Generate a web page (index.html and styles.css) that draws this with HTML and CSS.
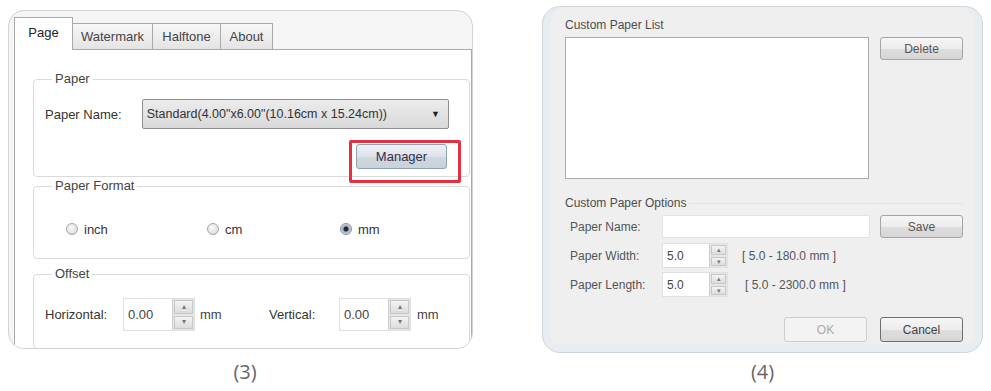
FILE: index.html
```html
<!DOCTYPE html>
<html lang="en">
<head>
    <meta charset="UTF-8">
    <meta name="viewport" content="width=device-width, initial-scale=1.0">
    <title>Paper Settings</title>
    <link rel="stylesheet" href="styles.css">
</head>
<body>

<div class="page">

    <!-- (3) driver properties, Page tab -->
    <div class="figure fig-left">
        <div class="tabdlg">
            <div class="tabs">
                <div class="tab tab-page active">Page</div>
                <div class="tab tab-water">Watermark</div>
                <div class="tab tab-half">Halftone</div>
                <div class="tab tab-about">About</div>
            </div>
            <div class="pane">
                <div class="group group-paper">
                    <div class="group-title">Paper</div>
                    <div class="row row-name">
                        <span class="lbl lbl-name">Paper Name:</span>
                        <div class="select">
                            <span class="select-text">Standard(4.00"x6.00"(10.16cm x 15.24cm))</span>
                            <span class="select-arrow">&#9660;</span>
                        </div>
                    </div>
                    <div class="row row-manager">
                        <div class="mark">
                            <button class="btn btn-manager">Manager</button>
                            <span class="highlight"></span>
                        </div>
                    </div>
                </div>

                <div class="group group-format">
                    <div class="group-title">Paper Format</div>
                    <div class="row row-radios">
                        <label class="radio radio-inch"><span class="dot"></span>inch</label>
                        <label class="radio radio-cm"><span class="dot"></span>cm</label>
                        <label class="radio radio-mm"><span class="dot checked"></span>mm</label>
                    </div>
                </div>

                <div class="group group-offset">
                    <div class="group-title">Offset</div>
                    <div class="row row-offset">
                        <span class="lbl lbl-horiz">Horizontal:</span>
                        <div class="spin spin-big">
                            <span class="spin-value">0.00</span>
                            <span class="spin-btns"><span class="up">&#9652;</span><span class="down">&#9662;</span></span>
                        </div>
                        <span class="unit unit-first">mm</span>
                        <span class="lbl lbl-vert">Vertical:</span>
                        <div class="spin spin-big">
                            <span class="spin-value">0.00</span>
                            <span class="spin-btns"><span class="up">&#9652;</span><span class="down">&#9662;</span></span>
                        </div>
                        <span class="unit">mm</span>
                    </div>
                </div>
            </div>
        </div>
        <div class="caption caption-left">(3)</div>
    </div>

    <!-- (4) custom paper manager -->
    <div class="figure fig-right">
        <div class="dlg">
            <div class="dlg-title">Custom Paper List</div>
            <div class="row row-list">
                <div class="listbox"></div>
                <button class="wbtn btn-side">Delete</button>
            </div>

            <div class="dlg-title opt-title">Custom Paper Options</div>
            <div class="row row-field">
                <span class="flbl">Paper Name:</span>
                <div class="textbox"></div>
                <button class="wbtn btn-side btn-save">Save</button>
            </div>
            <div class="row row-field row-width">
                <span class="flbl">Paper Width:</span>
                <div class="spin spin-small">
                    <span class="spin-value">5.0</span>
                    <span class="spin-btns"><span class="up">&#9652;</span><span class="down">&#9662;</span></span>
                </div>
                <span class="range">[ 5.0 - 180.0 mm ]</span>
            </div>
            <div class="row row-field row-length">
                <span class="flbl">Paper Length:</span>
                <div class="spin spin-small">
                    <span class="spin-value">5.0</span>
                    <span class="spin-btns"><span class="up">&#9652;</span><span class="down">&#9662;</span></span>
                </div>
                <span class="range range-long">[ 5.0 - 2300.0 mm ]</span>
            </div>

            <div class="row row-actions">
                <button class="wbtn btn-ok" disabled>OK</button>
                <button class="wbtn btn-cancel">Cancel</button>
            </div>
        </div>
        <div class="caption">(4)</div>
    </div>

</div>

</body>
</html>
```

FILE: styles.css
```css
body {
    margin: 0;
    background: #fff;
    font-family: "Liberation Sans", Arial, sans-serif;
    color: #333;
}
.page {
    display: flex;
    align-items: flex-start;
    width: 991px;
    height: 391px;
    overflow: hidden;
}
.row {
    display: flex;
    align-items: center;
}

/* ---------- left figure ---------- */
.fig-left {
    margin: 10px 0 0 8px;
    width: 465px;
}
.tabdlg {
    box-sizing: border-box;
    height: 339px;
    border: 1px solid #d2d2d2;
    border-radius: 16px;
    background: #f5f5f5;
    padding: 6px 0 0 5px;
    overflow: hidden;
    font-size: 13px;
}
.tabs {
    display: flex;
    align-items: flex-end;
    height: 32px;
}
.tab {
    box-sizing: border-box;
    height: 26px;
    border: 1px solid #a9a9a9;
    border-bottom: none;
    margin-right: -1px;
    background: linear-gradient(#f7f7f7, #e4e4e4);
    color: #444;
    text-align: center;
    line-height: 26px;
}
.tab.active {
    height: 33px;
    margin-bottom: -1px;
    background: #fff;
    position: relative;
    z-index: 1;
    line-height: 30px;
    color: #222;
}
.tab-page { width: 59px; }
.tab-water { width: 81px; }
.tab-half { width: 69px; }
.tab-about { width: 53px; }

.pane {
    height: 320px;
    border: 1px solid #a9a9a9;
    background: #fff;
    padding: 29px 0 0 18px;
}
.group {
    box-sizing: border-box;
    width: 437px;
    border: 1px solid #dadada;
    border-radius: 4px;
    padding: 0 20px 0 11px;
}
.group-title {
    width: fit-content;
    margin: -9px 0 0 7px;
    padding: 0 3px;
    background: #fff;
    line-height: 16px;
    color: #444;
}
.group-paper { padding-bottom: 7px; }
.row-name {
    margin-top: 12px;
    height: 30px;
}
.lbl-name { width: 97px; }
.select {
    box-sizing: border-box;
    display: flex;
    align-items: center;
    justify-content: space-between;
    width: 308px;
    height: 30px;
    border: 1px solid #8f8f8f;
    border-radius: 2px;
    background: linear-gradient(#ececec, #d9d9d9);
    padding: 0 8px 0 4px;
    font-size: 12.5px;
    color: #333;
}
.select-arrow { font-size: 9px; color: #222; }
.row-manager {
    margin-top: 15px;
    justify-content: flex-end;
    padding-right: 2px;
}
.mark { position: relative; }
.btn-manager {
    box-sizing: border-box;
    width: 91px;
    height: 25px;
    border: 1px solid #8ea3b4;
    border-radius: 3px;
    background: linear-gradient(#eef1f6, #dde3ea 50%, #cfd7df 51%, #c9d2da);
    font: 13px "Liberation Sans", Arial, sans-serif;
    color: #3a2f48;
    padding: 0;
}
.highlight {
    position: absolute;
    left: -7px;
    top: -4px;
    width: 106px;
    height: 37px;
    border: 3px solid #e2323f;
    border-radius: 2px;
}

.group-format {
    margin-top: 9px;
    padding-bottom: 19px;
}
.row-radios {
    margin: 25px 0 0 21px;
    height: 20px;
}
.radio {
    display: flex;
    align-items: center;
    color: #333;
}
.radio-inch { width: 141px; }
.radio-cm { width: 133px; }
.dot {
    box-sizing: border-box;
    width: 12px;
    height: 12px;
    margin-right: 6px;
    border: 1px solid #a6a6a6;
    border-radius: 50%;
    background: radial-gradient(circle at 40% 35%, #fafafa, #d4d4d4);
}
.dot.checked {
    background: radial-gradient(circle, #2a2a2a 0 2px, #9fb3c4 3px, #dfe6ec 6px);
    border-color: #7f93a5;
}

.group-offset {
    margin-top: 15px;
    padding-bottom: 17px;
}
.row-offset {
    margin-top: 16px;
    height: 33px;
}
.lbl-horiz { width: 78px; }
.spin {
    display: flex;
    background: #fff;
    border: 1px solid #e0e0e0;
    box-sizing: border-box;
}
.spin-big {
    width: 72px;
    height: 33px;
}
.spin-value {
    flex: 1;
    display: flex;
    align-items: center;
    padding-left: 4px;
    color: #444;
}
.spin-btns {
    display: flex;
    flex-direction: column;
    width: 21px;
    background: #e6e6e6;
    border-left: 1px solid #d0d0d0;
}
.spin-btns span {
    flex: 1;
    display: flex;
    align-items: center;
    justify-content: center;
    margin: 1px;
    background: linear-gradient(#f4f4f4, #dcdcdc);
    border: 1px solid #c8c8c8;
    font-size: 8px;
    color: #777;
    line-height: 1;
}
.unit { margin-left: 6px; color: #444; }
.unit-first { width: 69px; margin-left: 5px; }
.lbl-vert { width: 70px; }

.caption {
    text-align: center;
    font-family: "Open Sans", "Noto Sans", sans-serif;
    font-size: 20px;
    line-height: 24px;
    color: #666;
    margin-top: 7px;
}
.caption-left {
    margin-top: 11px;
    padding-left: 9px;
}

/* ---------- right figure ---------- */
.fig-right {
    margin: 6px 0 0 69px;
    width: 441px;
}
.dlg {
    border: 1px solid #cdd5dd;
    border-radius: 18px;
    background: #efefef;
    box-shadow: inset 8px 0 0 #e9edf1, inset -8px 0 0 #e9edf1, inset 0 -8px 0 #e9edf1;
    padding: 11px 19px 10px 22px;
    font-size: 12px;
    color: #555;
}
.dlg-title {
    line-height: 14px;
    color: #4d4d4d;
}
.row-list {
    align-items: flex-start;
    margin-top: 5px;
}
.listbox {
    box-sizing: border-box;
    width: 304px;
    height: 142px;
    border: 1px solid #ababab;
    background: #fff;
}
.wbtn {
    box-sizing: border-box;
    width: 83px;
    height: 23px;
    border: 1px solid #a5a5a5;
    border-radius: 3px;
    background: linear-gradient(#f6f6f6, #ececec 50%, #dedede 51%, #d6d6d6);
    font: 12px "Liberation Sans", Arial, sans-serif;
    color: #555;
    padding: 0;
}
.btn-side { margin-left: 11px; }
.opt-title {
    display: flex;
    align-items: center;
    margin-top: 17px;
}
.opt-title::after {
    content: "";
    flex: 1;
    margin-left: 3px;
    border-top: 1px solid #e2e2e2;
}
.row-field {
    margin-top: 5px;
    height: 23px;
}
.flbl {
    width: 92px;
    margin-left: 5px;
}
.textbox {
    width: 208px;
    height: 23px;
    background: #fff;
    border: 1px solid #e4e4e4;
    box-sizing: border-box;
}
.btn-save { margin-left: 10px; }
.row-width { height: 25px; }
.row-length { height: 25px; margin-top: 4px; }
.spin-small {
    width: 66px;
    height: 25px;
}
.spin-small .spin-btns { width: 17px; }
.spin-small .spin-btns span { font-size: 7px; }
.range { margin-left: 14px; }
.range-long { margin-left: 17px; }
.row-actions {
    margin-top: 20px;
    justify-content: flex-end;
    gap: 13px;
}
.wbtn.btn-ok {
    height: 25px;
    border-color: #cdcdcd;
    background: #f3f3f3;
    color: #a8a8a8;
}
.btn-cancel {
    height: 25px;
    border-color: #6f6f6f;
    color: #444;
}
```
